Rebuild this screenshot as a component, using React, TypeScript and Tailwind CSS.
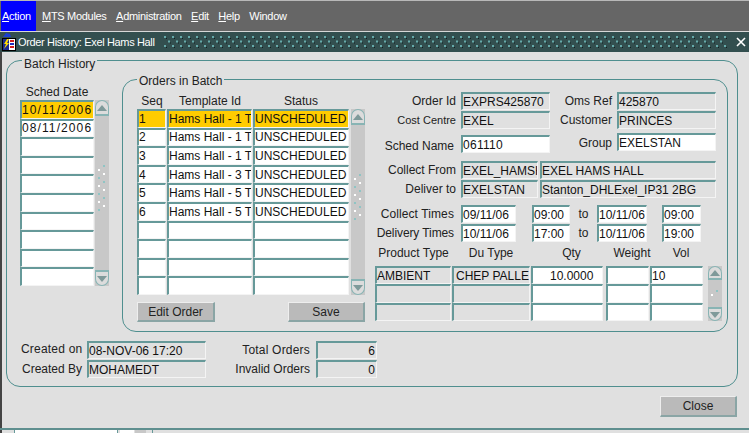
import type { ReactNode } from "react";

const Field = ({
  text,
  className = "",
  grey = false,
  active = false,
  right = false,
}: {
  text?: string;
  className?: string;
  grey?: boolean;
  active?: boolean;
  right?: boolean;
}) => (
  <div
    className={`flex items-center overflow-hidden whitespace-nowrap border-t-2 border-l-2 border-r border-b border-t-[#669999] border-l-[#669999] border-r-[#f4f4f4] border-b-[#f4f4f4] text-[12px] leading-none text-[#111] ${
      active ? "bg-[#ffcc00]" : grey ? "bg-[#e0e0e0]" : "bg-white"
    } ${right ? "justify-end pr-[1px]" : ""} ${className}`}
  >
    {text}
  </div>
);

const Label = ({ children, className = "", small = false }: { children: ReactNode; className?: string; small?: boolean }) => (
  <div className={`whitespace-nowrap leading-none text-[#222] ${small ? "text-[11px]" : "text-[12px]"} ${className}`}>{children}</div>
);

const Arrow = ({ down = false }: { down?: boolean }) => (
  <svg width="10" height="6" viewBox="0 0 10 6" className="block">
    <polygon points={down ? "0,0 10,0 5,6" : "5,0 10,6 0,6"} fill="#7f9a9a" />
  </svg>
);

const Grip = ({ rows = 6 }: { rows?: number }) => (
  <svg width="10" height={rows * 8} viewBox={`0 0 10 ${rows * 8}`} className="block">
    {Array.from({ length: rows }).map((_, i) => (
      <g key={i}>
        <rect x="6" y={i * 8} width="2" height="2" fill={i % 2 ? "#ffffff" : "#8fc4c4"} />
        <rect x="1" y={i * 8 + 4} width="2" height="2" fill={i % 2 ? "#8fc4c4" : "#ffffff"} />
      </g>
    ))}
  </svg>
);

const ScrollBar = ({ grip = 6, small = false, className = "" }: { grip?: number; small?: boolean; className?: string }) => (
  <div className={`flex w-[14px] flex-col bg-[#c8c8c8] ${className}`}>
    <div className={`flex items-center justify-center rounded-t-[7px] border border-b-2 border-[#88b4b4] bg-[#dcdcdc] ${small ? "h-[14px]" : "h-[16px]"}`}>
      <Arrow />
    </div>
    <div className={`flex flex-1 items-center justify-center ${small ? "" : "pb-[8px]"}`}>
      <Grip rows={grip} />
    </div>
    <div className={`flex items-center justify-center rounded-b-[7px] border border-t-2 border-[#88b4b4] bg-[#dcdcdc] ${small ? "h-[14px]" : "h-[16px]"}`}>
      <Arrow down />
    </div>
  </div>
);

const Button = ({ text, className = "" }: { text: string; className?: string }) => (
  <div
    className={`flex items-center justify-center border-t border-l border-r-2 border-b-2 border-t-[#eeeeee] border-l-[#eeeeee] border-r-[#8aa5a5] border-b-[#8aa5a5] bg-[#bababa] text-[12px] leading-none text-[#222] ${className}`}
  >
    {text}
  </div>
);

const orders = [
  ["1", "Hams Hall - 1 T", "UNSCHEDULED"],
  ["2", "Hams Hall - 1 T", "UNSCHEDULED"],
  ["3", "Hams Hall - 1 T", "UNSCHEDULED"],
  ["4", "Hams Hall - 3 T", "UNSCHEDULED"],
  ["5", "Hams Hall - 5 T", "UNSCHEDULED"],
  ["6", "Hams Hall - 5 T", "UNSCHEDULED"],
  ["", "", ""],
  ["", "", ""],
  ["", "", ""],
  ["", "", ""],
];

const dates = ["10/11/2006", "08/11/2006", "", "", "", "", "", "", "", ""];

const products = [
  ["AMBIENT", "CHEP PALLE", "10.0000", "", "10"],
  ["", "", "", "", ""],
  ["", "", "", "", ""],
];

export default function App() {
  return (
    <div className="flex h-[433px] w-[749px] flex-col overflow-hidden bg-[#e0e0e0] font-['Liberation_Sans',Arial,sans-serif]">
      {/* menu */}
      <div className="flex h-[32px] shrink-0 items-stretch border-t border-b border-t-[#b8b8b8] border-b-[#d8d8d8] bg-[#666666] text-[11px] tracking-[-0.3px] text-white">
        <div className="ml-[1px] flex w-[35px] items-center bg-[#0000ff] pl-[1px]">
          <span><u>A</u>ction</span>
        </div>
        <div className="ml-[6px] flex items-center gap-[9.5px]">
          <span><u>M</u>TS Modules</span>
          <span><u>A</u>dministration</span>
          <span><u>E</u>dit</span>
          <span><u>H</u>elp</span>
          <span>Window</span>
        </div>
      </div>

      {/* title bar */}
      <div className="flex h-[20px] shrink-0 items-center bg-[#334f4f] pl-[2px] text-white">
        <svg width="14" height="18" viewBox="0 0 14 18" className="block shrink-0">
          <path d="M1 4 L4 0 L8 1 L9 4 Z" fill="#1a3fd0" />
          <rect x="0.5" y="5.5" width="13" height="12" fill="#ffffff" stroke="#000000" strokeWidth="1" />
          <rect x="1" y="6" width="6" height="11" fill="#1a2a90" />
          <path d="M5 6 L2 11 L4 11 L2 16 L7 10 L5 10 L7 6 Z" fill="#ffdd00" />
          <rect x="8" y="7" width="4" height="2" fill="#d02020" />
          <rect x="8" y="10" width="4" height="2" fill="#2030c0" />
          <rect x="8" y="13" width="4" height="2" fill="#d02020" />
        </svg>
        <span className="ml-[2px] whitespace-nowrap text-[11px] tracking-[-0.35px]">Order History: Exel Hams Hall</span>
        <svg className="ml-[9px] block h-[14px] w-[563px] shrink-0">
          <defs>
            <pattern id="dots" width="8" height="9" patternUnits="userSpaceOnUse">
              <rect x="0" y="1" width="2" height="2" fill="#66aaaa" />
              <rect x="2" y="3" width="1" height="1" fill="#0f2222" />
              <rect x="4" y="5.5" width="2" height="2" fill="#66aaaa" />
              <rect x="6" y="7.5" width="1" height="1" fill="#0f2222" />
            </pattern>
          </defs>
          <rect width="563" height="14" fill="url(#dots)" />
        </svg>
        <svg width="10" height="10" viewBox="0 0 10 10" className="ml-[9px] block">
          <path d="M1 1 L9 9 M9 1 L1 9" stroke="#ffffff" strokeWidth="1.6" />
        </svg>
      </div>

      {/* window body */}
      <div className="flex h-[376px] shrink-0 flex-col border-l-2 border-l-[#444444] pl-[4px] pt-[8px]">
        {/* Batch History */}
        <div className="relative flex h-[327px] w-[732px] flex-col rounded-[14px] border border-[#4f8f8f] pl-[13px] pt-[18px]">
          <div className="absolute left-[15px] top-[-4px] bg-[#e0e0e0] px-[2px] text-[12px] leading-[14px] text-[#222]">Batch History</div>

          <div className="flex items-start">
            {/* Sched Date list */}
            <div className="mt-[6px] flex w-[89px] flex-col">
              <Label className="mb-[1px] h-[14px] w-[74px] pt-[1px] text-center">Sched Date</Label>
              <div className="flex h-[186px] justify-between">
                <div className="grid w-[74px] grid-rows-10">
                  {dates.map((d, i) => (
                    <Field key={i} text={d} active={i === 0} className="tracking-[1.1px]" />
                  ))}
                </div>
                <ScrollBar />
              </div>
            </div>

            {/* Orders in Batch */}
            <div className="relative ml-[13px] flex h-[253px] w-[606px] rounded-[14px] border border-[#4f8f8f] pl-[14px] pt-[15px]">
              <div className="absolute left-[14px] top-[-6px] bg-[#e0e0e0] px-[2px] text-[12px] leading-[14px] text-[#222]">Orders in Batch</div>

              <div className="flex w-[228px] flex-col">
                <div className="grid h-[14px] grid-cols-[30px_86px_96px] text-center">
                  <Label>Seq</Label>
                  <Label>Template Id</Label>
                  <Label>Status</Label>
                </div>
                <div className="flex h-[186px] justify-between">
                  <div className="grid w-[212px] grid-cols-[29px_85px_96px] grid-rows-10 gap-x-[1px]">
                    {orders.map((o, i) => (
                      <div key={i} className="contents">
                        <Field text={o[0]} active={i === 0} />
                        <Field text={o[1]} active={i === 0} />
                        <Field text={o[2]} active={i === 0} />
                      </div>
                    ))}
                  </div>
                  <ScrollBar />
                </div>
                <div className="mt-[7px] flex justify-between">
                  <Button text="Edit Order" className="h-[20px] w-[78px]" />
                  <Button text="Save" className="h-[20px] w-[77px]" />
                </div>
              </div>

              <div className="ml-[10px] mt-[-3px] flex w-[347px] flex-col">
                <div className="flex h-[18px] items-center">
                  <Label className="w-[81px] text-right">Order Id</Label>
                  <Field text="EXPRS425870" grey className="ml-[5px] h-[18px] w-[89px]" />
                  <Label className="w-[62px] text-right">Oms Ref</Label>
                  <Field text="425870" grey className="ml-[5px] h-[18px] w-[99px]" />
                </div>
                <div className="mt-[1px] flex h-[18px] items-center">
                  <Label small className="w-[81px] text-right">Cost Centre</Label>
                  <Field text="EXEL" grey className="ml-[5px] h-[18px] w-[89px]" />
                  <Label className="w-[62px] text-right">Customer</Label>
                  <Field text="PRINCES" grey className="ml-[5px] h-[18px] w-[99px]" />
                </div>
                <div className="mt-[4px] flex h-[20px]">
                  <Label className="mt-[7px] w-[79px] text-right">Sched Name</Label>
                  <Field text="061110" className="ml-[7px] mt-[2px] h-[18px] w-[89px] tracking-[0.3px]" />
                  <Label className="mt-[4px] w-[62px] text-right">Group</Label>
                  <Field text="EXELSTAN" className="ml-[5px] h-[18px] w-[99px]" />
                </div>
                <div className="mt-[8px] flex h-[18px] items-center">
                  <Label className="w-[81px] text-right">Collect From</Label>
                  <Field text="EXEL_HAMSH" grey className="ml-[5px] h-[18px] w-[77px]" />
                  <Field text="EXEL HAMS HALL" grey className="ml-[2px] h-[18px] w-[176px]" />
                </div>
                <div className="mt-[1px] flex h-[18px] items-center">
                  <Label className="w-[81px] text-right">Deliver to</Label>
                  <Field text="EXELSTAN" grey className="ml-[5px] h-[18px] w-[77px]" />
                  <Field text="Stanton_DHLExel_IP31 2BG" grey className="ml-[2px] h-[18px] w-[176px]" />
                </div>
                <div className="mt-[7px] flex h-[18px] items-center">
                  <Label className="w-[79px] text-right tracking-[0.1px]">Collect Times</Label>
                  <Field text="09/11/06" className="ml-[7px] h-[18px] w-[55px]" />
                  <Field text="09:00" className="ml-[16px] h-[18px] w-[38px]" />
                  <Label className="w-[27px] text-center">to</Label>
                  <Field text="10/11/06" className="h-[18px] w-[50px]" />
                  <Field text="09:00" className="ml-[15px] h-[18px] w-[39px]" />
                </div>
                <div className="mt-[1px] flex h-[18px] items-center">
                  <Label className="w-[79px] text-right tracking-[-0.1px]">Delivery Times</Label>
                  <Field text="10/11/06" className="ml-[7px] h-[18px] w-[55px]" />
                  <Field text="17:00" className="ml-[16px] h-[18px] w-[38px]" />
                  <Label className="w-[27px] text-center">to</Label>
                  <Field text="10/11/06" className="h-[18px] w-[50px]" />
                  <Field text="19:00" className="ml-[15px] h-[18px] w-[39px]" />
                </div>
                <div className="mt-[5px] grid h-[14px] grid-cols-[77px_78px_83px_38px_60px] text-center">
                  <Label>Product Type</Label>
                  <Label>Du Type</Label>
                  <Label>Qty</Label>
                  <Label className="justify-self-center">Weight</Label>
                  <Label>Vol</Label>
                </div>
                <div className="mt-[5px] flex h-[55px]">
                  <div className="grid w-[330px] grid-cols-[76px_78px_72px_45px_53px] grid-rows-3 gap-x-[1px]">
                    {products.map((p, i) => (
                      <div key={i} className="contents">
                        <Field text={p[0]} grey />
                        <Field text={p[1]} grey className="pl-[2px]" />
                        <Field text={p[2]} className="pl-[17px]" />
                        <Field text={p[3]} className="ml-[2px]" />
                        <Field text={p[4]} />
                      </div>
                    ))}
                  </div>
                  <ScrollBar grip={1} small className="ml-[3px]" />
                </div>
              </div>
            </div>
          </div>

          {/* created / totals */}
          <div className="ml-[1px] mt-[9px] grid grid-cols-[66px_119px_110px_61px] items-center gap-y-[1px]">
            <Label className="mb-[3px] pr-[5px] text-right tracking-[0.2px]">Created on</Label>
            <Field text="08-NOV-06 17:20" grey className="h-[18px]" />
            <Label className="pr-[6px] text-right tracking-[0.2px]">Total Orders</Label>
            <Field text="6" grey right className="h-[18px]" />
            <Label className="pr-[5px] text-right">Created By</Label>
            <Field text="MOHAMEDT" grey className="h-[18px]" />
            <Label className="pr-[6px] text-right">Invalid Orders</Label>
            <Field text="0" grey right className="h-[18px]" />
          </div>
        </div>

        <div className="mr-[12px] mt-[9px] flex justify-end">
          <Button text="Close" className="h-[21px] w-[77px]" />
        </div>
      </div>

      {/* teal window edge and what shows below it */}
      <div className="h-[2px] shrink-0 bg-[#5f8f8f]" />
      <div className="flex h-[3px] shrink-0 bg-[#e0e0e0]">
        <div className="w-[2px] bg-[#444444]" />
        <div className="ml-[12px] w-[104px] border-l border-r border-[#669999] bg-white" />
        <div className="ml-[2px] w-[14px] bg-white" />
        <div className="ml-[1px] w-[11px] bg-[#c8c8c8]" />
        <div className="ml-[6px] w-[1px] bg-[#669999]" />
      </div>
    </div>
  );
}
